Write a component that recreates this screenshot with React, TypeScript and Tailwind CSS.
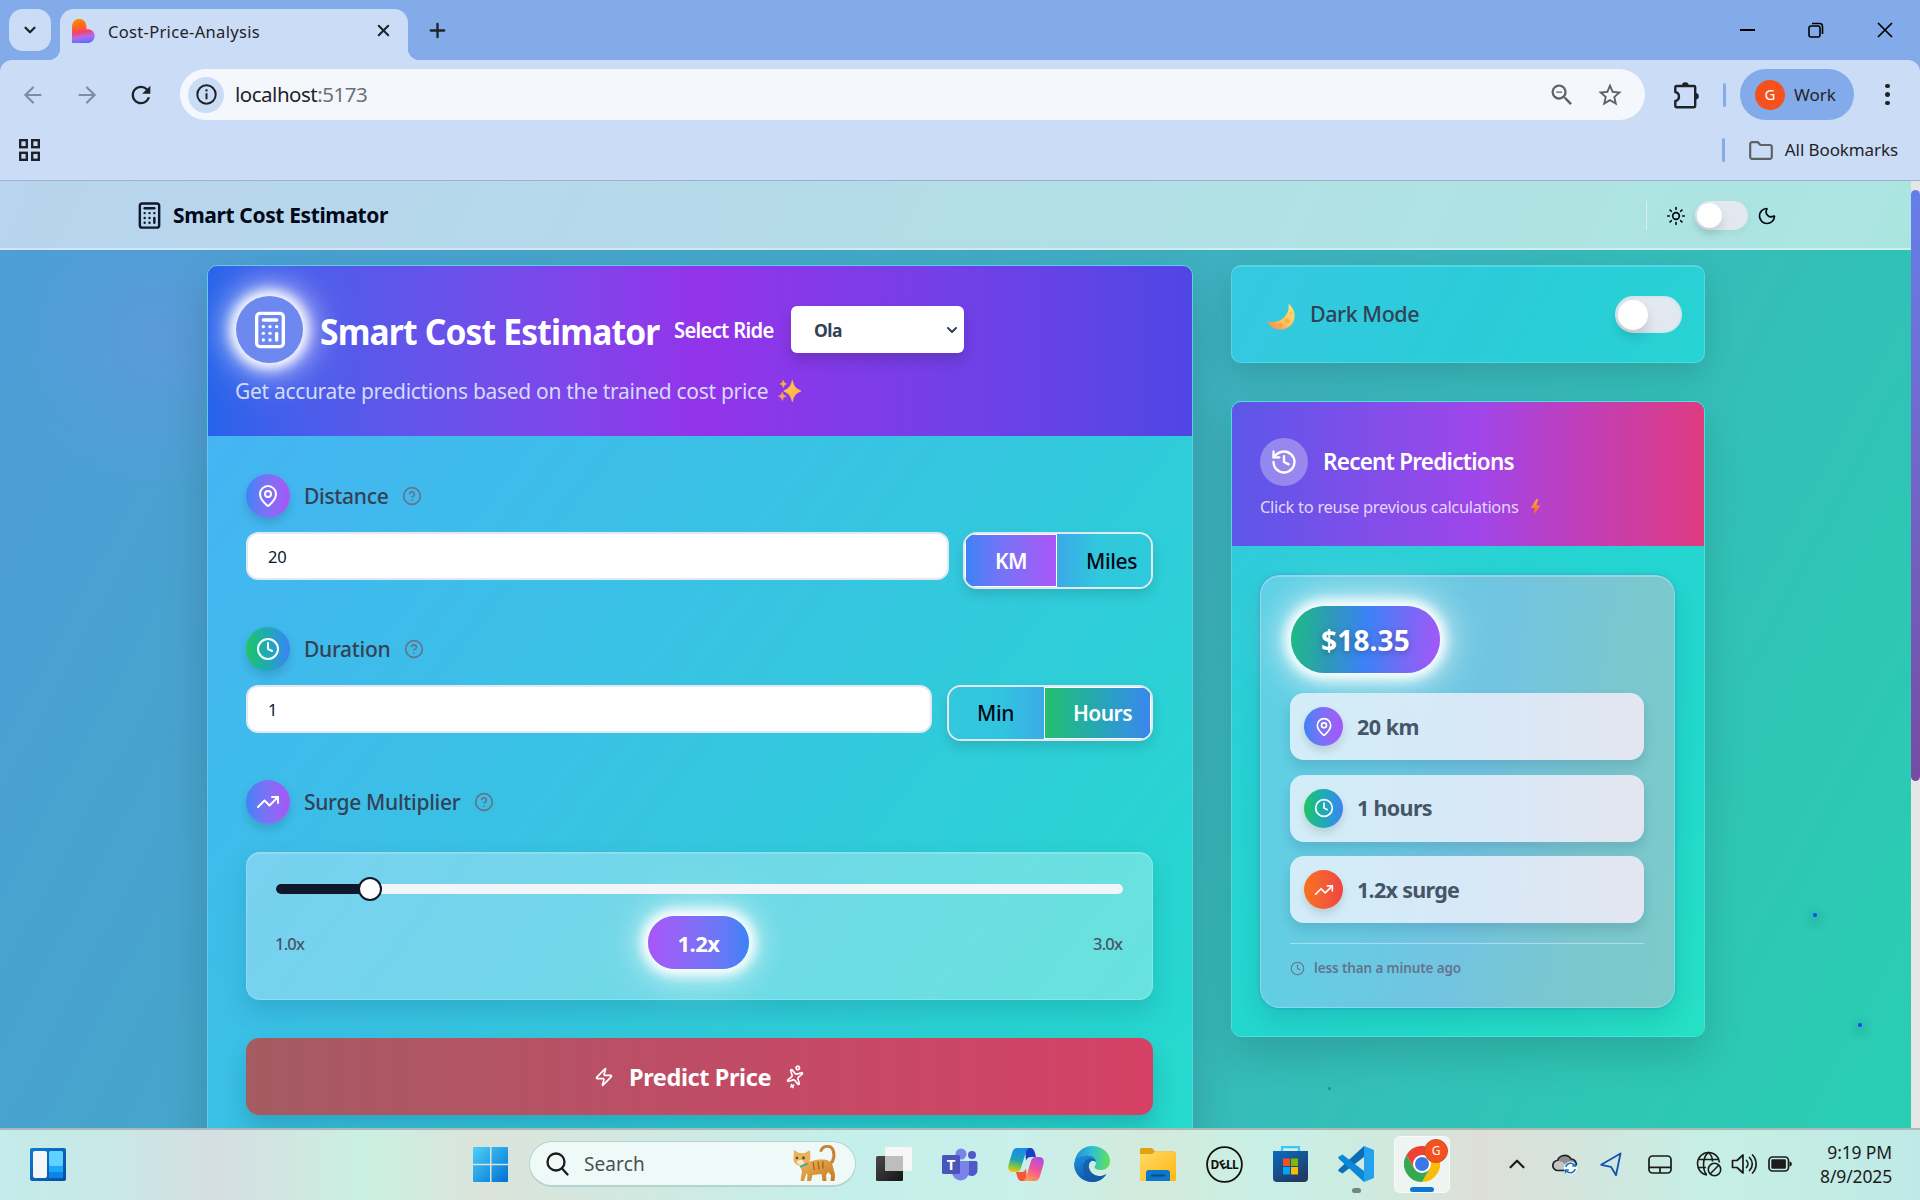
import type { ReactNode } from "react";
import {
  ArrowLeft,
  ArrowRight,
  Calculator,
  ChevronDown,
  ChevronUp,
  CircleHelp,
  Clock,
  History,
  MapPin,
  Moon,
  Plus,
  Sparkles,
  Sun,
  TrendingUp,
  X,
  Zap,
} from "lucide-react";
import { MdRefresh, MdStarBorder, MdZoomOut } from "react-icons/md";

/* ---------- Browser chrome ---------- */

function Favicon() {
  return (
    <svg width="24" height="24" viewBox="0 0 24 24" className="shrink-0">
      <defs>
        <linearGradient id="fav" x1="0.35" y1="0" x2="0.5" y2="1">
          <stop offset="0" stopColor="#ff8a00" />
          <stop offset="0.3" stopColor="#ff6a1a" />
          <stop offset="0.55" stopColor="#f8406a" />
          <stop offset="0.75" stopColor="#b06bf0" />
          <stop offset="1" stopColor="#5a6cff" />
        </linearGradient>
      </defs>
      <path d="M0 24V7a7.2 7.2 0 0 1 14.4 0v3.2h2.4a7 7 0 0 1 0 13.8Z" fill="url(#fav)" />
    </svg>
  );
}

function TabStrip() {
  return (
    <div className="flex h-[60px] items-end bg-[#84abe9]">
      <div className="mb-[9px] ml-[9px] flex h-[42px] w-[42px] items-center justify-center rounded-[14px] bg-[#cbdcf6]">
        <ChevronDown size={18} strokeWidth={3} color="#1f2328" />
      </div>
      <div className="relative ml-[9px] flex h-[51px] w-[348px] items-center rounded-t-[14px] bg-[#cbdcf6] pb-[7px] pl-3">
        <div className="absolute bottom-0 -left-3 h-3 w-3 bg-[radial-gradient(circle_at_0_0,transparent_12px,#cbdcf6_12.5px)]" />
        <div className="absolute -right-3 bottom-0 h-3 w-3 bg-[radial-gradient(circle_at_100%_0,transparent_12px,#cbdcf6_12.5px)]" />
        <Favicon />
        <span className="mt-[2px] ml-3 w-[266px] text-[16.5px] leading-none tracking-[0.320px] text-[#1f2328]">Cost-Price-Analysis</span>
        <X size={19} strokeWidth={2.6} color="#1f2328" className="mb-[2px]" />
      </div>
      <Plus size={23} strokeWidth={2.4} color="#1f2328" className="mb-[18px] ml-[18px]" />
      <div className="mr-[27px] mb-[22px] ml-auto flex items-center gap-[53px]">
        <div className="h-[2px] w-[15px] bg-black" />
        <svg width="16" height="16" viewBox="0 0 16 16" fill="none" stroke="#000" strokeWidth="1.6">
          <rect x="1" y="4" width="11" height="11" rx="2" />
          <path d="M4 1.5h7.5a3 3 0 0 1 3 3V12" />
        </svg>
        <svg width="16" height="16" viewBox="0 0 16 16" fill="none" stroke="#000" strokeWidth="1.7">
          <path d="M1 1l14 14M15 1L1 15" />
        </svg>
      </div>
    </div>
  );
}

function Toolbar() {
  return (
    <div className="bg-[#84abe9]">
      <div className="flex h-[120px] flex-col rounded-t-[12px] bg-[#cbdcf6]">
        <div className="flex h-[69px] items-center">
          <ArrowLeft size={26} strokeWidth={2} color="#7f8ca3" className="ml-5" />
          <ArrowRight size={26} strokeWidth={2} color="#7f8ca3" className="ml-[28px]" />
          <MdRefresh size={28} color="#1f2328" className="ml-[27px]" />
          <div className="ml-[25px] flex h-[51px] w-[1465px] items-center rounded-full bg-[#f4f8fd] pl-2">
            <div className="flex h-9 w-9 items-center justify-center rounded-full bg-[#cbdcf6]">
              <svg width="21" height="21" viewBox="0 0 21 21" fill="none" stroke="#1f2328" strokeWidth="2">
                <circle cx="10.5" cy="10.5" r="9.2" />
                <path d="M10.5 9.3v6M10.5 5.2v2.2" />
              </svg>
            </div>
            <span className="ml-[11px] text-[20.5px] leading-none tracking-[-0.480px] text-[#1f2328]">
              localhost<span className="text-[#6b7077]">:5173</span>
            </span>
            <MdZoomOut size={28} color="#5f6368" className="ml-auto" />
            <MdStarBorder size={28} color="#5f6368" className="mr-[21px] ml-[20px]" />
          </div>
          <svg width="26" height="28" viewBox="0 0 26 28" className="ml-[28px]">
            <path
              d="M3.500 5H21a1.200 1.200 0 0 1 1.200 1.200V25a1.200 1.200 0 0 1-1.200 1.200H3.500A1.200 1.200 0 0 1 2.300 25v-5a4.600 4.600 0 0 0 0-9V6.200A1.200 1.200 0 0 1 3.500 5Z"
              fill="none"
              stroke="#1f2328"
              strokeWidth="2.400"
              strokeLinejoin="round"
            />
            <path d="M9 4.500a3.300 3.300 0 0 1 6.600 0ZM22.500 12a3.300 3.300 0 0 1 0 6.600Z" fill="#1f2328" />
          </svg>
          <div className="ml-[24px] h-6 w-[3px] rounded bg-[#84abe9]" />
          <div className="ml-[14px] flex h-[51px] w-[114px] items-center rounded-full bg-[#84abe9] pl-[15px]">
            <div className="flex h-[30px] w-[30px] items-center justify-center rounded-full bg-[#f4511e] text-[15px] leading-none text-white">G</div>
            <span className="ml-[9px] text-[17px] leading-none text-[#1f2328]">Work</span>
          </div>
          <div className="ml-[31px] flex flex-col gap-1">
            <div className="h-[4.5px] w-[4.5px] rounded-full bg-[#1f2328]" />
            <div className="h-[4.5px] w-[4.5px] rounded-full bg-[#1f2328]" />
            <div className="h-[4.5px] w-[4.5px] rounded-full bg-[#1f2328]" />
          </div>
        </div>
        <div className="flex h-[42px] items-center pr-[22px] pl-[19px]">
          <svg width="21" height="22" viewBox="0 0 21 22" fill="none" stroke="#1f2328" strokeWidth="2.4">
            <rect x="1.2" y="1.2" width="6.6" height="7" />
            <rect x="13.2" y="1.2" width="6.6" height="7" />
            <rect x="1.2" y="13.8" width="6.6" height="7" />
            <rect x="13.2" y="13.8" width="6.6" height="7" />
          </svg>
          <div className="ml-auto h-6 w-[3px] rounded bg-[#84abe9]" />
          <svg width="24" height="19" viewBox="0 0 24 19" fill="none" stroke="#5f6368" strokeWidth="2.2" className="ml-[24px]">
            <path d="M1.2 3a1.8 1.8 0 0 1 1.8-1.8h5.8l2.6 2.8H21a1.8 1.8 0 0 1 1.8 1.8V16a1.8 1.8 0 0 1-1.8 1.8H3A1.8 1.8 0 0 1 1.2 16Z" />
          </svg>
          <span className="mb-[2px] ml-3 text-[17px] leading-none tracking-[-0.1px] text-[#1f2328]">All Bookmarks</span>
        </div>
      </div>
    </div>
  );
}

/* ---------- Emoji drawings ---------- */

function SparklesEmoji() {
  return (
    <svg width="23" height="22" viewBox="0 0 23 22">
      <defs>
        <linearGradient id="spk" x1="0" y1="0" x2="1" y2="1">
          <stop offset="0" stopColor="#ffd35c" />
          <stop offset="1" stopColor="#ffa33a" />
        </linearGradient>
      </defs>
      <path d="M14.300 0.500c1.200 5.500 3 8 8.500 10.500-5.500 2.400-7.300 5-8.500 10.500-1.200-5.500-3-8.100-8.500-10.500 5.500-2.500 7.300-5 8.500-10.500Z" fill="url(#spk)" stroke="#ffb84a" strokeWidth="1" strokeLinejoin="round" />
      <path d="M5.300 0.200c.6 2.200 1.200 2.900 3.200 3.700-2 .8-2.600 1.500-3.200 3.700-.6-2.200-1.200-2.900-3.200-3.700 2-.8 2.600-1.500 3.200-3.700Z" fill="#ffb13d" stroke="#ffb13d" strokeWidth=".6" />
      <path d="M4.300 12c.7 2.500 1.500 3.300 3.900 4.200-2.400.9-3.200 1.700-3.900 4.200-.7-2.500-1.500-3.300-3.900-4.200 2.400-.9 3.200-1.700 3.900-4.200Z" fill="#ff9a5c" stroke="#ff9a5c" strokeWidth=".6" />
    </svg>
  );
}

function MoonEmoji() {
  return (
    <svg width="28" height="27" viewBox="0 0 28 27">
      <defs>
        <linearGradient id="moonG" x1="0.9" y1="0.1" x2="0.2" y2="1">
          <stop offset="0" stopColor="#ffdf7a" />
          <stop offset="0.6" stopColor="#ffc25c" />
          <stop offset="1" stopColor="#ff8a4a" />
        </linearGradient>
      </defs>
      <path d="M21.500 0.500C31 9 28.500 20.500 20.500 24.700 13 28.600 3.500 26.200 0.400 18.500c5.600 1.600 12.300.3 16.600-4 3.700-3.700 5.300-8.800 4.500-14Z" fill="url(#moonG)" />
      <circle cx="20" cy="18" r="2.600" fill="#f5a94a" opacity=".7" />
      <circle cx="13" cy="22" r="1.600" fill="#f08b45" opacity=".6" />
      <circle cx="24" cy="10" r="1.500" fill="#f0b050" opacity=".7" />
    </svg>
  );
}

function BoltEmoji() {
  return (
    <svg width="11" height="17" viewBox="0 0 11 17">
      <defs>
        <linearGradient id="bolt" x1="0" y1="0" x2="0" y2="1">
          <stop offset="0" stopColor="#ffb03a" />
          <stop offset="1" stopColor="#f4512e" />
        </linearGradient>
      </defs>
      <path d="M6.500 0 0.500 9h4L3.500 16.500 10.500 6.500H6.500L8 0Z" fill="url(#bolt)" />
    </svg>
  );
}

/* ---------- App page ---------- */

function NavBar() {
  return (
    <div className="flex h-[69px] w-[1911px] items-center border-b-2 border-white/40 bg-[linear-gradient(115deg,#b8d4ee_0%,#b5dbe9_40%,#b0e2e4_70%,#abe5e0_100%)] pt-[2px]">
      <Calculator size={29} strokeWidth={2} color="#0f172a" className="ml-[135px]" />
      <span className="ml-[9px] text-[21px] leading-none font-bold tracking-[-0.38px] text-[#020817]">Smart Cost Estimator</span>
      <div className="mr-[19px] ml-auto h-[29px] w-px bg-white/50" />
      <Sun size={20} color="#020817" strokeWidth={2} />
      <div className="ml-[9px] flex h-[29px] w-[53px] items-center rounded-full bg-[#e2e8f0] pl-[2px] shadow-[0_3px_8px_rgba(0,0,0,0.05)]">
        <div className="h-[25px] w-[25px] rounded-full bg-white shadow-[0_6px_10px_rgba(0,0,0,0.12)]" />
      </div>
      <Moon size={20} color="#020817" strokeWidth={2} className="mr-[134px] ml-[9px]" />
    </div>
  );
}

function FieldLabel({ icon, label, green }: { icon: ReactNode; label: string; green?: boolean }) {
  return (
    <div className="flex h-11 items-center">
      <div
        className={
          "flex h-11 w-11 items-center justify-center rounded-full text-white shadow-[0_5px_10px_rgba(0,0,0,0.14)] bg-linear-to-r " +
          (green ? "from-[#22c55e] to-[#3b82f6]" : "from-[#3b82f6] to-[#a855f7]")
        }
      >
        {icon}
      </div>
      <span className="ml-[14px] text-[21px] leading-none font-medium tracking-[-0.300px] text-[#334155]">{label}</span>
      <CircleHelp size={20} strokeWidth={2} color="#64748b" className="ml-[14px]" />
    </div>
  );
}

function NumberInput({ value }: { value: string }) {
  return (
    <div className="flex h-12 flex-1 items-center rounded-[12px] border-2 border-[#e2e8f0] bg-white pt-[2px] pl-[20px] text-[16.5px] leading-none tracking-[-0.2px] text-[#0f172a]">
      {value}
    </div>
  );
}

function PredictorCard() {
  return (
    <div className="ml-[207px] h-[1000px] w-[986px] overflow-hidden rounded-t-[10px] border border-[#62cbe9] shadow-[0_20px_45px_rgba(0,0,0,0.16)]">
      <div className="h-[170px] bg-linear-to-r from-[#2563eb] via-[#9333ea] to-[#4f46e5] pt-[30px] pl-[28px]">
        <div className="flex h-[67px] items-center">
          <div className="flex h-[67px] w-[67px] items-center justify-center rounded-full bg-[#6d88ee] shadow-[0_0_12px_5px_#fff,0_0_26px_9px_rgba(255,255,255,0.6),0_0_56px_6px_rgba(255,255,255,0.38)]">
            <Calculator size={40} strokeWidth={2} color="#fff" />
          </div>
          <span className="mt-1 ml-[17px] w-[354px] origin-left scale-x-[0.92] text-[36.5px] leading-none font-bold tracking-[-0.900px] whitespace-nowrap text-white">Smart Cost Estimator</span>
          <span className="w-[117px] origin-left scale-x-[0.94] text-[21.5px] leading-none font-semibold tracking-[-0.750px] whitespace-nowrap text-white">Select Ride</span>
          <div className="flex h-[47px] w-[173px] items-center rounded-md bg-white pr-1 pl-[23px] shadow-[0_8px_14px_rgba(0,0,0,0.15)]">
            <span className="mt-[2px] text-[17.5px] leading-none font-bold tracking-[-0.500px] text-[#334155]">Ola</span>
            <ChevronDown size={16} strokeWidth={3} color="#334155" className="ml-auto" />
          </div>
        </div>
        <div className="mt-[16px] flex h-6 items-center">
          <span className="-ml-px text-[21px] leading-none tracking-[-0.310px] whitespace-nowrap text-[#d3dcfb]">Get accurate predictions based on the trained cost price</span>
          <span className="ml-[10px]">
            <SparklesEmoji />
          </span>
        </div>
      </div>

      <div className="h-[830px] bg-[linear-gradient(128deg,#45b4f3_0%,#36c5e1_45%,#27d5d1_80%,#25dccb_100%)] pt-[38px] pr-[39px] pl-[38px]">
        <FieldLabel icon={<MapPin size={24} />} label="Distance" />
        <div className="mt-[14px] flex items-start gap-[14px]">
          <NumberInput value="20" />
          <div className="flex h-[57px] w-[190px] overflow-hidden rounded-[14px] border-2 border-[#e2e8f0] shadow-[0_6px_12px_rgba(0,0,0,0.12)]">
            <div className="flex w-[92px] items-center justify-center border border-white bg-linear-to-r from-[#3b82f6] to-[#a855f7] pt-[2px] text-[21px] leading-none font-semibold tracking-[-0.500px] text-white">KM</div>
            <div className="flex flex-1 items-center bg-[linear-gradient(90deg,#3ba9e8_0%,#30c8dc_45%,#2ecadb_100%)] pt-[2px] pl-[29px] text-[21px] leading-none font-medium tracking-[-0.380px] text-[#020817]">Miles</div>
          </div>
        </div>

        <div className="mt-[38px]">
          <FieldLabel icon={<Clock size={24} />} label="Duration" green />
        </div>
        <div className="mt-[14px] flex items-start gap-[15px]">
          <NumberInput value="1" />
          <div className="flex h-[56px] w-[206px] overflow-hidden rounded-[14px] border-2 border-[#e2e8f0] shadow-[0_6px_12px_rgba(0,0,0,0.12)]">
            <div className="flex w-[95px] items-center bg-[linear-gradient(90deg,#32c8de_0%,#32c4df_55%,#3aabe8_100%)] pl-[28px] text-[21px] leading-none font-medium tracking-[-0.380px] text-[#020817]">Min</div>
            <div className="flex flex-1 items-center border border-white bg-linear-to-r from-[#25bf69] to-[#3b86ee] pl-[28px] text-[21px] leading-none font-semibold tracking-[-0.540px] text-white">Hours</div>
          </div>
        </div>

        <div className="mt-[39px]">
          <FieldLabel icon={<TrendingUp size={24} />} label="Surge Multiplier" />
        </div>
        <div className="mt-[28px] h-[148px] rounded-[14px] border border-t-2 border-white/20 bg-white/30 px-[29px] pt-[30px] shadow-[0_12px_26px_rgba(0,60,80,0.16)]">
          <div className="relative h-[10px] rounded-full bg-[#f1f5f9]">
            <div className="h-[10px] w-[94px] rounded-full bg-[#0f172a]" />
            <div className="absolute -top-[7px] left-[82px] h-6 w-6 rounded-full border-2 border-[#0f172a] bg-white" />
          </div>
          <div className="mt-[22px] flex h-[53px] items-center justify-between text-[16.5px] leading-none font-medium tracking-[-0.800px] text-[#475569]">
            <span className="mt-1 -ml-px w-[30px]">1.0x</span>
            <div className="mr-[1px] flex h-[53px] w-[101px] items-center justify-center rounded-full bg-linear-to-r from-[#a855f7] to-[#3b82f6] text-[22px] font-bold tracking-[-0.500px] text-white shadow-[0_0_12px_6px_#fff,0_0_28px_9px_rgba(255,255,255,0.5),0_0_56px_6px_rgba(255,255,255,0.3)]">
              1.2x
            </div>
            <span className="mt-1 w-[30px]">3.0x</span>
          </div>
        </div>

        <div className="mt-[38px] flex h-[77px] items-center justify-center rounded-[13px] bg-linear-to-r from-[#a45b62] via-[#bf4c66] to-[#d54164] text-[23.5px] leading-none font-bold text-white shadow-[0_14px_24px_rgba(0,50,70,0.2)]">
          <Zap size={20} strokeWidth={2} />
          <span className="mt-[2px] mr-[14px] ml-[15px] tracking-[-0.400px]">Predict Price</span>
          <Sparkles size={20} strokeWidth={2} className="rotate-[152deg]" />
        </div>
      </div>
    </div>
  );
}

function DarkModeCard() {
  return (
    <div className="flex h-[98px] items-center rounded-[10px] border border-t-2 border-[#54d7e5] bg-[linear-gradient(120deg,#36c8e2,#2accd8_55%,#27d3d3)] pr-[22px] pl-[35px] shadow-[0_12px_30px_rgba(0,0,0,0.13)]">
      <div className="mt-[4px]">
        <MoonEmoji />
      </div>
      <span className="ml-[15px] mb-px text-[21.5px] leading-none font-medium tracking-[-0.470px] text-[#334155]">Dark Mode</span>
      <div className="ml-auto flex h-[37px] w-[67px] items-center rounded-full border-2 border-[#d5e5ee] bg-[#e2e8f0] pl-[1px]">
        <div className="h-[30px] w-[30px] rounded-full bg-white shadow-[0_8px_12px_rgba(0,0,0,0.13)]" />
      </div>
    </div>
  );
}

const ROWS = [
  { text: "20 km", cls: "from-[#3b82f6] to-[#a855f7]", icon: <MapPin size={20} />, trk: "tracking-[-0.500px]" },
  { text: "1 hours", cls: "from-[#22c55e] to-[#3b82f6]", icon: <Clock size={20} />, trk: "tracking-[-0.680px]" },
  { text: "1.2x surge", cls: "from-[#f97316] to-[#ef4444]", icon: <TrendingUp size={20} />, trk: "tracking-[-0.700px]" },
];

function RecentCard() {
  return (
    <div className="mt-[38px] h-[636px] overflow-hidden rounded-[10px] border border-[#52dadd] shadow-[0_18px_40px_rgba(0,0,0,0.14)]">
      <div className="h-[144px] bg-[linear-gradient(90deg,#5b57e8_0%,#9f46ea_52%,#b83fc6_68%,#df3b80_100%)] pt-[36px] pl-[28px]">
        <div className="flex h-12 items-center">
          <div className="flex h-12 w-12 items-center justify-center rounded-full bg-white/30">
            <History size={28} color="#fff" strokeWidth={2} />
          </div>
          <span className="ml-[15px] text-[22.5px] leading-none font-semibold tracking-[-0.750px] text-white">Recent Predictions</span>
        </div>
        <div className="mt-[13px] flex items-center">
          <span className="text-[16.500px] leading-none tracking-[-0.310px] whitespace-nowrap text-[#e3d6fb]">Click to reuse previous calculations</span>
          <span className="ml-[11px]">
            <BoltEmoji />
          </span>
        </div>
      </div>

      <div className="h-[490px] bg-[linear-gradient(140deg,#30cbdc_0%,#26d3d3_30%,#22d8cc_65%,#25e1c4_100%)] pt-[29px] pl-[28px]">
        <div className="h-[433px] w-[415px] rounded-[20px] border border-t-2 border-white/25 bg-[linear-gradient(100deg,#5cd0e5_0%,#66cce3_25%,#72c4e1_52%,#7ac7d0_75%,#7ccac8_100%)] px-[29px] pt-[29px] shadow-[0_12px_24px_rgba(0,60,80,0.14),0_0_3px_rgba(60,110,230,0.5)]">
          <div className="ml-px flex h-[67px] w-[149px] items-center justify-center rounded-full bg-[linear-gradient(95deg,#1dbc82_0%,#2f97bb_28%,#3b82f6_50%,#a855f7_100%)] text-[28px] leading-none font-bold tracking-[0.170px] text-white shadow-[0_0_12px_6px_#fff,0_0_30px_10px_rgba(255,255,255,0.5),0_0_60px_8px_rgba(255,255,255,0.3)]">
            <span className="[text-shadow:0_2px_6px_rgba(0,0,0,0.25)]">$18.35</span>
          </div>
          <div className="mt-[20px] flex w-[354px] flex-col gap-[14.5px]">
            {ROWS.map((r) => (
              <div key={r.text} className="flex h-[67px] items-center rounded-[14px] bg-[linear-gradient(90deg,rgba(219,240,250,0.92),rgba(220,234,248,0.95)_50%,#e3e6f0)] pl-[14px] shadow-[0_7px_12px_rgba(0,30,60,0.13)]">
                <div className={"flex h-[39px] w-[39px] items-center justify-center rounded-full text-white shadow-[0_5px_9px_rgba(0,0,0,0.12)] bg-linear-to-r " + r.cls}>{r.icon}</div>
                <span className={"ml-[14px] text-[21.5px] leading-none font-bold text-[#475569] " + r.trk}>{r.text}</span>
              </div>
            ))}
          </div>
          <div className="mt-[20px] flex w-[354px] items-center border-t border-white/40 pt-[17px]">
            <Clock size={15} color="#64748b" strokeWidth={1.8} />
            <span className="ml-[9px] text-[13.500px] leading-none font-semibold tracking-[-0.120px] text-[#64748b]">less than a minute ago</span>
          </div>
        </div>
      </div>
    </div>
  );
}

function AppPage() {
  return (
    <div className="relative h-[947px] overflow-hidden bg-[radial-gradient(circle_at_160px_160px,rgba(105,150,225,0.55),transparent_150px),linear-gradient(118deg,#4e9dd8_0%,#45a6ca_30%,#3cb3bd_58%,#30c3b6_82%,#29cfb2_100%)]">
      <NavBar />
      <div className="mt-[15px] flex items-start">
        <PredictorCard />
        <div className="ml-[38px] w-[474px]">
          <DarkModeCard />
          <RecentCard />
        </div>
      </div>
      <div className="absolute top-[732px] left-[1813px] h-1 w-1 rounded-full bg-[#1148f5] shadow-[0_3px_10px_4px_rgba(0,50,80,0.14)]" />
      <div className="absolute top-[842px] left-[1858px] h-1 w-1 rounded-full bg-[#1148f5] shadow-[0_3px_10px_4px_rgba(0,50,80,0.14)]" />
      <div className="absolute top-[906px] left-[1328px] h-[3px] w-[3px] rounded-full bg-[#1b8f8f]" />
      <div className="absolute top-0 right-0 h-full w-[9px] bg-[#e6e6e6] pt-[9px]">
        <div className="h-[591px] rounded-full bg-linear-to-b from-[#667eea] to-[#764ba2]" />
      </div>
    </div>
  );
}

/* ---------- Taskbar ---------- */

function WidgetsIcon() {
  return (
    <svg width="36" height="33" viewBox="0 0 36 33">
      <defs>
        <linearGradient id="wg" x1="0" y1="0" x2="1" y2="1">
          <stop offset="0" stopColor="#0c7bd9" />
          <stop offset="1" stopColor="#0a4e9e" />
        </linearGradient>
      </defs>
      <rect width="36" height="33" rx="2" fill="url(#wg)" />
      <rect x="3" y="3" width="14" height="27" rx="2" fill="#f4f6f8" />
      <rect x="19" y="3" width="14" height="15" rx="1.500" fill="#5fd2ff" />
      <rect x="19" y="18" width="14" height="6" fill="#1ea7f7" />
      <rect x="19" y="24" width="14" height="6" fill="#0a86ea" />
    </svg>
  );
}

function WindowsIcon() {
  return (
    <svg width="35" height="35" viewBox="0 0 35 35">
      <defs>
        <linearGradient id="win" gradientUnits="userSpaceOnUse" x1="0" y1="0" x2="35" y2="35">
          <stop offset="0" stopColor="#4cd0fb" />
          <stop offset="1" stopColor="#0070d0" />
        </linearGradient>
      </defs>
      <path d="M1 0h16v16.700H0V1a1 1 0 0 1 1-1Zm17.500 0H34a1 1 0 0 1 1 1v15.700H18.500ZM0 18.300h17V35H1a1 1 0 0 1-1-1Zm18.500 0H35V34a1 1 0 0 1-1 1H18.500Z" fill="url(#win)" />
    </svg>
  );
}

function CatIcon() {
  return (
    <svg width="46" height="37" viewBox="0 0 46 37">
      <defs>
        <linearGradient id="cat" x1="0" y1="0" x2="1" y2="1">
          <stop offset="0" stopColor="#f0b45c" />
          <stop offset="1" stopColor="#c47a22" />
        </linearGradient>
      </defs>
      <path d="M39 19c5-4 4.500-11 2.500-15-2-3.500-9-4-11.500 1.500" fill="none" stroke="#c98432" strokeWidth="3" strokeLinecap="round" />
      <path d="M13 17c4 1 9-2 15-2.500 7-.5 13 1 14 7 .6 4 1.800 6 2 8.500L43.500 36h-4l.5-6-3-3-2 3.500.5 5.500h-4l-1-7-9 1-1.500 6h-4l.5-6-1-2-2.500 8h-3.500L11 26c-2-3-1-6 2-9Z" fill="url(#cat)" />
      <path d="M3 5l5 3h6l5-3c0 4 1 8-.5 11.500-1.500 3.500-5.500 5-8.500 4.500-4-.5-7-2.500-7.500-6Z" fill="#eeb059" />
      <path d="M6 16c2-1.500 6-1.500 7 1 .5 2-2.500 3-4 2.800-2-.3-4-1.800-3-3.800Z" fill="#fae6c6" />
      <path d="M22 17l1.500 8M27 16.500l1 8M32 16.500v7" stroke="#a9641b" strokeWidth="1.300" />
      <path d="M9 22l8-3.500" stroke="#18b8a5" strokeWidth="1.700" />
      <circle cx="6" cy="13" r="1.200" fill="#265d49" />
      <circle cx="12.500" cy="13" r="1.400" fill="#265d49" />
    </svg>
  );
}

function TaskViewIcon() {
  return (
    <svg width="36" height="34" viewBox="0 0 36 34">
      <defs>
        <linearGradient id="tv" x1="0" y1="0" x2="1" y2="1">
          <stop offset="0" stopColor="#4a4a4a" />
          <stop offset="1" stopColor="#141414" />
        </linearGradient>
      </defs>
      <rect y="9" width="27" height="25" rx="1.500" fill="url(#tv)" />
      <rect x="9" width="27" height="24" rx="1.500" fill="#f6f6f6" />
      <rect x="9" y="9" width="18" height="15" fill="#bdbdbd" />
    </svg>
  );
}

function TeamsIcon() {
  return (
    <svg width="36" height="33" viewBox="0 0 36 33">
      <circle cx="19" cy="6" r="5.500" fill="#7b83eb" />
      <circle cx="30" cy="7" r="4" fill="#5059c9" />
      <path d="M25 13h9a1.500 1.500 0 0 1 1.500 1.500V22a6 6 0 0 1-10.500 4Z" fill="#5059c9" />
      <path d="M11 13h16v11a8.500 8.500 0 0 1-17 0Z" fill="#7b83eb" />
      <rect y="7" width="18" height="19" rx="1.500" fill="#4b53bc" />
      <text x="9" y="22" textAnchor="middle" fontSize="15" fontWeight="700" fill="#fff" fontFamily="Noto Sans, sans-serif">T</text>
    </svg>
  );
}

function CopilotIcon() {
  return (
    <svg width="36" height="33" viewBox="0 0 36 33">
      <defs>
        <linearGradient id="cp1" x1="0.500" y1="0" x2="0.300" y2="1">
          <stop offset="0" stopColor="#178be8" />
          <stop offset="0.500" stopColor="#1fa3b8" />
          <stop offset="0.800" stopColor="#8cc63c" />
          <stop offset="1" stopColor="#f4c318" />
        </linearGradient>
        <linearGradient id="cp2" x1="0.700" y1="0" x2="0.300" y2="1">
          <stop offset="0" stopColor="#b04de0" />
          <stop offset="0.500" stopColor="#f0559a" />
          <stop offset="1" stopColor="#ff9a4a" />
        </linearGradient>
      </defs>
      <path d="M17 0h5c3 0 4 1.500 5 5l1 4h-5c-3 0-4 1-5 4Z" fill="#1b3fc4" />
      <path d="M9 0h12c-2 1-3 3-4 7l-4 13c-1 3-2.500 4-5 4H5c-4 0-5.500-3-4.500-7L4 5c1-3.500 2.500-5 5-5Z" fill="url(#cp1)" />
      <path d="M19 33h-5c-3 0-4-1.500-5-5l-1-4h5c3 0 4-1 5-4Z" fill="#f2573a" />
      <path d="M27 33H15c2-1 3-3 4-7l4-13c1-3 2.500-4 5-4h3c4 0 5.500 3 4.500 7L32 28c-1 3.500-2.500 5-5 5Z" fill="url(#cp2)" />
    </svg>
  );
}

function EdgeIcon() {
  return (
    <svg width="36" height="36" viewBox="0 0 36 36">
      <defs>
        <linearGradient id="ed1" x1="0" y1="0.300" x2="1" y2="0.400">
          <stop offset="0" stopColor="#1c8fdc" />
          <stop offset="0.500" stopColor="#2fc1cf" />
          <stop offset="1" stopColor="#62e05a" />
        </linearGradient>
        <linearGradient id="ed2" x1="0.200" y1="0" x2="0.700" y2="1">
          <stop offset="0" stopColor="#1b8edd" />
          <stop offset="1" stopColor="#0c4fa4" />
        </linearGradient>
      </defs>
      <path d="M0.500 17C1 7 9 0 18 0c10.500 0 18 7 18 15 0 6-4 9-9 9-4.500 0-6.500-1.500-6.500-3 0-1 1.500-1.500 1.500-4.500C22 12 17 9 12.500 9 6 9 2 12.500 0.500 17Z" fill="url(#ed1)" />
      <path d="M0 18C1 12 6 9 12.500 9c5 0 9.500 3 9.500 7-1.500-1.700-4-2-5.500-.5-4 4-1 14 8 14.500 3 .2 5.500-.5 8-2-3.500 5.500-8.500 8-14.500 8C8 36 0 28 0 18Z" fill="url(#ed2)" />
      <path d="M9 22c0-6 4-10 8-9.500 3 .3 5 2 5 4-1.500-2-4.500-2-6-.2-3 4 0 12.700 8.500 13.700 3 .3 5.500-.6 8-2-3.500 5-8.500 8-14 8C13 35 9 29 9 22Z" fill="#1559a8" opacity=".75" />
    </svg>
  );
}

function FolderIcon() {
  return (
    <svg width="36" height="33" viewBox="0 0 36 33">
      <defs>
        <linearGradient id="fo" x1="0" y1="0" x2="1" y2="1">
          <stop offset="0" stopColor="#ffd968" />
          <stop offset="1" stopColor="#fdb813" />
        </linearGradient>
      </defs>
      <path d="M0 1.500A1.500 1.500 0 0 1 1.500 0H12l3 3.500H34V10H0Z" fill="#e0a30c" />
      <path d="M0 6h12l3-2.500h19.500A1.500 1.500 0 0 1 36 5v26.500a1.500 1.500 0 0 1-1.500 1.500h-33A1.500 1.500 0 0 1 0 31.500Z" fill="url(#fo)" />
      <path d="M6 33v-8a3 3 0 0 1 3-3h18a3 3 0 0 1 3 3v8Z" fill="#0f77c9" />
      <rect x="11" y="26.500" width="14" height="2" rx="1" fill="#0a4a86" />
    </svg>
  );
}

function DellIcon() {
  return (
    <svg width="37" height="37" viewBox="0 0 37 37">
      <circle cx="18.500" cy="18.500" r="17.400" fill="none" stroke="#111" strokeWidth="1.800" />
      <g fill="#111" fontSize="12" fontWeight="700" fontFamily="Noto Sans, sans-serif">
        <text x="4.500" y="22.800">D</text>
        <text x="13.500" y="22.800" transform="rotate(-28 17 18.500)">E</text>
        <text x="20" y="22.800">L</text>
        <text x="26" y="22.800">L</text>
      </g>
    </svg>
  );
}

function StoreIcon() {
  return (
    <svg width="35" height="36" viewBox="0 0 35 36">
      <defs>
        <linearGradient id="st" x1="0" y1="0" x2="0.600" y2="1">
          <stop offset="0" stopColor="#0a6cc0" />
          <stop offset="1" stopColor="#213a66" />
        </linearGradient>
      </defs>
      <path d="M9 7V1.200h17V7" fill="none" stroke="#3bc6f5" strokeWidth="2.200" />
      <path d="M0 5h35v27a4 4 0 0 1-4 4H4a4 4 0 0 1-4-4Z" fill="url(#st)" />
      <rect x="10" y="12.500" width="7" height="7.500" fill="#f25022" />
      <rect x="18" y="12.500" width="7" height="7.500" fill="#7fba00" />
      <rect x="10" y="21" width="7" height="7.500" fill="#00a4ef" />
      <rect x="18" y="21" width="7" height="7.500" fill="#ffb900" />
    </svg>
  );
}

function VsCodeIcon() {
  return (
    <svg width="36" height="36" viewBox="0 0 36 36">
      <path d="M26 0l9 3.500a1.500 1.500 0 0 1 1 1.500v26a1.500 1.500 0 0 1-1 1.500L26 36Z" fill="#24a2f0" />
      <path d="M26 0v11L4.500 27.500 1 25.500c-1-.7-1-1.500 0-2.500Z" fill="#0f6db5" />
      <path d="M26 36V25L4.500 8.500 1 10.500c-1 .7-1 1.500 0 2.500Z" fill="#0b89d6" />
    </svg>
  );
}

function ChromeIcon() {
  return (
    <svg width="36" height="36" viewBox="0 0 36 36">
      <path d="M18 9h15.600A18 18 0 0 1 18 36l7.800-13.500Z" fill="#fbbc05" />
      <path d="M10.200 22.500L2.400 9A18 18 0 0 0 18 36l7.800-13.500Z" fill="#34a853" />
      <path d="M18 9h15.600A18 18 0 0 0 2.400 9l7.800 13.500Z" fill="#ea4335" />
      <circle cx="18" cy="18" r="9" fill="#fff" />
      <circle cx="18" cy="18" r="7" fill="#3b78e7" />
    </svg>
  );
}

function TrayIcons() {
  return (
    <>
      <ChevronUp size={26} strokeWidth={2} color="#1b1b1b" className="ml-[54px]" />
      <svg width="26" height="22" viewBox="0 0 26 22" className="ml-[22px]">
        <path d="M6 17.500a5 5 0 0 1-.5-10A7.500 7.500 0 0 1 19 6a5.500 5.500 0 0 1 3 10c-4 1.500-10 1.500-16 1.500Z" fill="#8e8e8e" stroke="#222" strokeWidth="1.600" />
        <path d="M6 16.500c-3 0-4-2-4-4.500s3-4.500 5.500-4c4 1 6 4 9 6l-3 2.500Z" fill="#c6c6c6" />
        <circle cx="18.500" cy="15" r="6.500" fill="#fff" />
        <path d="M13.800 14a5 5 0 0 1 9-1.500M23.200 16a5 5 0 0 1-9 1.500" fill="none" stroke="#0c72c9" strokeWidth="1.500" />
        <path d="M23.400 9.800v3.200h-3.200M13.600 20.200V17h3.200" fill="none" stroke="#0c72c9" strokeWidth="1.300" />
      </svg>
      <svg width="22" height="25" viewBox="0 0 22 25" fill="none" stroke="#1553ae" strokeWidth="1.800" strokeLinejoin="round" className="ml-[22px]">
        <path d="M20.500 1.500L1.200 12.800l9.800 2 5 8.500Z" />
      </svg>
      <svg width="24" height="19" viewBox="0 0 24 19" fill="none" stroke="#1b1b1b" strokeWidth="1.700" className="ml-[26px]">
        <rect x="1" y="1" width="22" height="17" rx="3.500" />
        <path d="M1 12.300h22M12 12.300V18" />
      </svg>
      <svg width="26" height="26" viewBox="0 0 26 26" fill="none" stroke="#1b1b1b" strokeWidth="1.600" className="ml-[24px]">
        <path d="M11 24C5.500 23.500 1.500 18.500 1.500 12.500 1.500 6.500 6.500 1.500 12.500 1.500c6 0 10.500 4.500 11 10" />
        <path d="M10.500 23.500C6.500 19 6 6 12.500 1.500c2.500 2 4 5.500 4 9M2.500 8.500h20M2 16.500h8" />
        <circle cx="18.500" cy="18.500" r="6.200" />
        <path d="M14.300 22.700l8.400-8.400" />
      </svg>
      <svg width="26" height="22" viewBox="0 0 26 22" fill="none" stroke="#1b1b1b" strokeWidth="1.700" strokeLinejoin="round" strokeLinecap="round" className="ml-[9px]">
        <path d="M1.500 7.500h4.500L12 2v18l-6-5.500H1.500Z" />
        <path d="M15.500 7.500a5 5 0 0 1 0 7M18.500 4.500a9 9 0 0 1 0 13M21.500 2a13 13 0 0 1 0 18" />
      </svg>
      <svg width="24" height="16" viewBox="0 0 24 16" className="ml-[11px]">
        <rect x="1" y="1" width="19.500" height="14" rx="3.500" fill="none" stroke="#1b1b1b" strokeWidth="1.700" />
        <rect x="3.300" y="3.300" width="14.600" height="9.400" rx="1" fill="#1b1b1b" />
        <path d="M21.500 5.500c1.500 0 2.300 1 2.300 2.500s-.8 2.500-2.300 2.500Z" fill="#1b1b1b" />
      </svg>
    </>
  );
}

function Taskbar() {
  return (
    <div className="flex h-[72px] items-center border-t-2 border-[#a9b9b8] bg-[linear-gradient(90deg,#c4ecea_0%,#c8e8e6_6%,#d5dee3_11%,#cfe9e0_16%,#caf0e2_19%,#dbe4db_25%,#d0e9e1_34%,#c5efeb_44%,#c9f0ea_53%,#d3eadc_60%,#c9f0e6_66%,#cdebe0_71%,#dedfd7_77%,#d3e5dd_82%,#c6efe4_89%,#bfe9e6_100%)] pb-[2px]">
      <div className="ml-[30px]">
        <WidgetsIcon />
      </div>
      <div className="ml-[407px]">
        <WindowsIcon />
      </div>
      <div className="ml-[21px] flex h-[46px] w-[327px] items-center rounded-full border border-b-2 border-[#b3d3cf] bg-[#eff9f7] pr-[18px] pl-[16px]">
        <svg width="23" height="24" viewBox="0 0 23 24" fill="none" stroke="#1b1b1b" strokeWidth="2.300" strokeLinecap="round">
          <circle cx="10" cy="10" r="8.500" />
          <path d="M16 16.500l5.500 6" />
        </svg>
        <span className="mt-[2px] ml-[15px] text-[19px] leading-none tracking-[0.100px] text-[#4b5050]">Search</span>
        <span className="ml-auto">
          <CatIcon />
        </span>
      </div>
      <div className="ml-[20px] flex items-center gap-[30px]">
        <TaskViewIcon />
        <TeamsIcon />
        <CopilotIcon />
        <EdgeIcon />
        <FolderIcon />
        <DellIcon />
        <StoreIcon />
        <div className="relative">
          <VsCodeIcon />
          <div className="absolute -bottom-[11px] left-[14px] h-[5px] w-[9px] rounded-full bg-[#72857f]" />
        </div>
      </div>
      <div className="relative ml-[20px] flex h-[57px] w-[56px] items-center justify-center rounded-md border border-white/50 bg-[#edf4f1]">
        <ChromeIcon />
        <div className="absolute top-[2px] right-[1px] flex h-6 w-6 items-center justify-center rounded-full border border-[#c8532c] bg-[#f4511e] text-[12px] leading-none text-white">G</div>
        <div className="absolute bottom-0 left-[15px] h-[5px] w-6 rounded-full bg-[#0a78d4]" />
      </div>
      <TrayIcons />
      <div className="mr-[28px] ml-auto flex flex-col items-end text-[17.5px] leading-[24px] tracking-[-0.150px] text-[#1b1b1b]">
        <span>9:19 PM</span>
        <span>8/9/2025</span>
      </div>
    </div>
  );
}

export default function App() {
  return (
    <div className="flex h-[1200px] w-[1920px] flex-col overflow-hidden font-['Noto_Sans','Open_Sans',sans-serif]">
      <TabStrip />
      <Toolbar />
      <div className="h-px bg-[#9fb1cf]" />
      <AppPage />
      <Taskbar />
    </div>
  );
}
